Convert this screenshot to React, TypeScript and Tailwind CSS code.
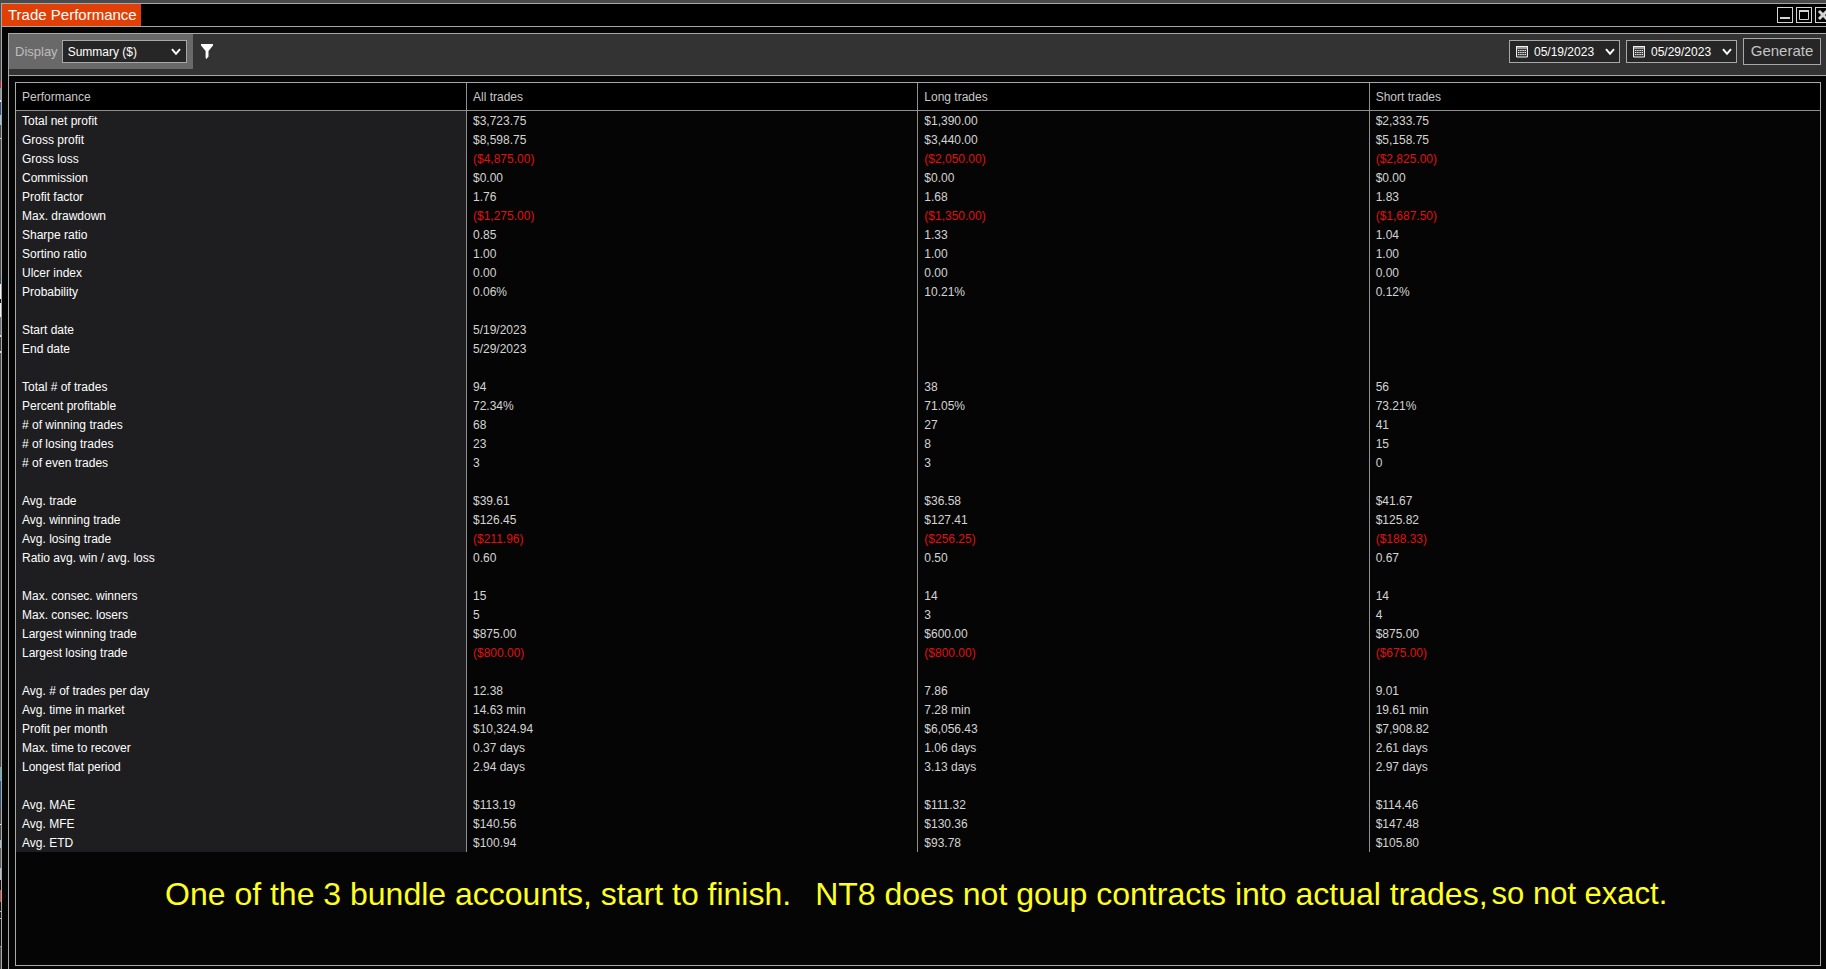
import { useId } from "react";

type Row = [string, string, string, string];

const groups: Row[][] = [
  [
    ["Total net profit", "$3,723.75", "$1,390.00", "$2,333.75"],
    ["Gross profit", "$8,598.75", "$3,440.00", "$5,158.75"],
    ["Gross loss", "($4,875.00)", "($2,050.00)", "($2,825.00)"],
    ["Commission", "$0.00", "$0.00", "$0.00"],
    ["Profit factor", "1.76", "1.68", "1.83"],
    ["Max. drawdown", "($1,275.00)", "($1,350.00)", "($1,687.50)"],
    ["Sharpe ratio", "0.85", "1.33", "1.04"],
    ["Sortino ratio", "1.00", "1.00", "1.00"],
    ["Ulcer index", "0.00", "0.00", "0.00"],
    ["Probability", "0.06%", "10.21%", "0.12%"],
  ],
  [
    ["Start date", "5/19/2023", "", ""],
    ["End date", "5/29/2023", "", ""],
  ],
  [
    ["Total # of trades", "94", "38", "56"],
    ["Percent profitable", "72.34%", "71.05%", "73.21%"],
    ["# of winning trades", "68", "27", "41"],
    ["# of losing trades", "23", "8", "15"],
    ["# of even trades", "3", "3", "0"],
  ],
  [
    ["Avg. trade", "$39.61", "$36.58", "$41.67"],
    ["Avg. winning trade", "$126.45", "$127.41", "$125.82"],
    ["Avg. losing trade", "($211.96)", "($256.25)", "($188.33)"],
    ["Ratio avg. win / avg. loss", "0.60", "0.50", "0.67"],
  ],
  [
    ["Max. consec. winners", "15", "14", "14"],
    ["Max. consec. losers", "5", "3", "4"],
    ["Largest winning trade", "$875.00", "$600.00", "$875.00"],
    ["Largest losing trade", "($800.00)", "($800.00)", "($675.00)"],
  ],
  [
    ["Avg. # of trades per day", "12.38", "7.86", "9.01"],
    ["Avg. time in market", "14.63 min", "7.28 min", "19.61 min"],
    ["Profit per month", "$10,324.94", "$6,056.43", "$7,908.82"],
    ["Max. time to recover", "0.37 days", "1.06 days", "2.61 days"],
    ["Longest flat period", "2.94 days", "3.13 days", "2.97 days"],
  ],
  [
    ["Avg. MAE", "$113.19", "$111.32", "$114.46"],
    ["Avg. MFE", "$140.56", "$130.36", "$147.48"],
    ["Avg. ETD", "$100.94", "$93.78", "$105.80"],
  ],
];

const columns = ["Performance", "All trades", "Long trades", "Short trades"];

// blank spacer row between groups
const rows = groups.flatMap((group, i): Row[] => (i === 0 ? group : [["", "", "", ""], ...group]));

// windows showing behind the left edge: [height, color]
const backdrop: [number, string][] = [
  [81, "#4a4a4a"],
  [7, "#c8283c"],
  [12, "#8c9296"],
  [2, "#f0f0f0"],
  [13, "#2f4f86"],
  [10, "#9cc4dc"],
  [13, "#4a4a4a"],
  [1, "#d8d8d8"],
  [136, "#4a4a4a"],
  [9, "#34465c"],
  [15, "#f4f4f4"],
  [4, "#101010"],
  [14, "#f0f0f0"],
  [18, "#66727c"],
  [2, "#e0e0e0"],
  [14, "#3c3c3c"],
  [2, "#e0e0e0"],
  [414, "#4a4a4a"],
  [14, "#5cb0b8"],
  [26, "#2c5488"],
  [17, "#4a4a4a"],
  [1, "#f0f0f0"],
  [15, "#4a4a4a"],
  [8, "#a8bcc8"],
  [20, "#606060"],
  [12, "#b4bcc4"],
  [10, "#101010"],
  [12, "#c8503c"],
  [9, "#101010"],
  [1, "#c0c0c0"],
  [6, "#101010"],
  [1, "#c0c0c0"],
  [27, "#101010"],
  [1, "#909090"],
];

function Chevron() {
  return (
    <svg width="10" height="8" viewBox="0 0 10 8" fill="none" stroke="#fff" strokeWidth="2" aria-hidden="true">
      <path d="M1 1.2 L5 5.8 L9 1.2" />
    </svg>
  );
}

function CalendarIcon() {
  return (
    <svg width="12" height="12" viewBox="0 0 12 12" aria-hidden="true">
      <path d="M0.5 0.5h11v10.5h-11z" fill="#3a3a3a" stroke="#f0f0f0" />
      <path d="M0 0h12v1H0z" fill="#f0f0f0" />
      <path d="M1 1h10v2H1z" fill="#9a9a9a" />
      <path d="M2 4.5h8M2 6.5h8M2 8.5h8" stroke="#f0f0f0" strokeDasharray="1.4 .8" />
    </svg>
  );
}

function DateField({ label, value }: { label: string; value: string }) {
  return (
    <div className="flex h-[23px] w-[111px] items-center border border-[#a8a8a8] bg-[#262626] pr-1 pl-1.5">
      <CalendarIcon />
      <input
        type="text"
        aria-label={label}
        defaultValue={value}
        className="ml-1.5 w-0 min-w-0 flex-1 bg-transparent text-xs text-white outline-none"
      />
      <button type="button" aria-label={`Open ${label} calendar`} className="flex">
        <Chevron />
      </button>
    </div>
  );
}

function WindowButton({ label, children }: { label: string; children: React.ReactNode }) {
  return (
    <button type="button" aria-label={label} className="flex size-4 items-center justify-center border border-[#d4d4d4]">
      <svg width="14" height="14" viewBox="0 0 14 14" fill="none" stroke="#d4d4d4" aria-hidden="true">
        {children}
      </svg>
    </button>
  );
}

function TitleBar() {
  return (
    <header className="flex h-[23px] items-center justify-between border-b border-[#a8a8a8] bg-black pr-[3px]">
      <h1 className="flex h-full items-center bg-[#e04006] pr-1 pl-1.5 text-[15px] text-white">Trade Performance</h1>
      <div className="flex gap-[3px]">
        <WindowButton label="Minimize">
          <path d="M2 10h10" strokeWidth="2" />
        </WindowButton>
        <WindowButton label="Maximize">
          <path d="M2.5 2.5h9v9h-9z" />
          <path d="M2 3h10" strokeWidth="2" />
        </WindowButton>
        <WindowButton label="Close">
          <path d="M3 3l8 8M11 3l-8 8" strokeWidth="3" />
        </WindowButton>
      </div>
    </header>
  );
}

function Toolbar() {
  const displayId = useId();
  return (
    <div className="flex h-[42px] items-start justify-between border-b border-[#a8a8a8] bg-[#333333] pr-1.5">
      <div className="flex items-center gap-2">
        <div className="flex h-[35px] items-center gap-1 bg-[#696969] px-1.5">
          <label htmlFor={displayId} className="text-[13px] text-[#bdbdbd]">
            Display
          </label>
          <div className="grid items-center">
            <select
              id={displayId}
              className="col-start-1 row-start-1 h-[23px] w-[125px] appearance-none border border-[#a8a8a8] bg-[#262626] pl-[5px] text-xs text-white"
            >
              <option>Summary ($)</option>
            </select>
            <span className="pointer-events-none col-start-1 row-start-1 mr-1.5 justify-self-end">
              <Chevron />
            </span>
          </div>
        </div>
        <button type="button" aria-label="Filter">
          <svg width="12" height="15" viewBox="0 0 12 15" fill="#fff" aria-hidden="true">
            <path d="M0 0h12v1.5L7.5 7v5.5L5.5 15 4.6 14V7L0 1.5z" />
          </svg>
        </button>
      </div>
      <div className="flex items-center gap-1.5 pt-1">
        <DateField label="start date" value="05/19/2023" />
        <DateField label="end date" value="05/29/2023" />
        <button type="button" className="h-[27px] w-[78px] border border-[#a8a8a8] bg-[#262626] text-[15px] text-[#c4c4c4]">
          Generate
        </button>
      </div>
    </div>
  );
}

function Cell({ value }: { value: string }) {
  return (
    <td className={`border-l border-[#8f8f8f] pl-1.5 ${value.startsWith("(") ? "text-[#e01010]" : "text-[#d4d4d4]"}`}>
      {value}
    </td>
  );
}

function PerformanceTable() {
  return (
    <table className="w-full table-fixed border-separate border-spacing-0 text-left text-xs">
      <thead>
        <tr className="h-7 bg-black text-[#c8c8c8]">
          {columns.map((name, i) => (
            <th
              key={name}
              scope="col"
              className={`border-b border-[#8f8f8f] pl-1.5 font-normal ${i === 0 ? "w-[450px]" : "border-l"}`}
            >
              {name}
            </th>
          ))}
        </tr>
      </thead>
      <tbody>
        {rows.map(([name, ...values], i) => (
          <tr key={i} className="h-[19px]">
            <th scope="row" className="bg-[#1e1e20] pl-1.5 font-normal text-white">
              {name}
            </th>
            {values.map((value, j) => (
              <Cell key={j} value={value} />
            ))}
          </tr>
        ))}
      </tbody>
    </table>
  );
}

export default function App() {
  return (
    <div className="flex h-screen overflow-hidden bg-[#4a4a4a] font-['Liberation_Sans',Arial,sans-serif]">
      <div className="flex w-px flex-col" aria-hidden="true">
        {backdrop.map(([height, color], i) => (
          <span key={i} className="shrink-0" style={{ height, backgroundColor: color }} />
        ))}
      </div>
      {/* The window runs a little past the right and bottom screen edges */}
      <main className="mt-[3px] -mr-[9px] -mb-[11px] flex flex-1 flex-col border border-[#a8a8a8] bg-[#050505]">
        <TitleBar />
        <div className="m-1.5 flex flex-1 flex-col border border-[#a8a8a8]">
          <Toolbar />
          <section className="m-1.5 flex-1 border border-[#a8a8a8]">
            <PerformanceTable />
            <p className="mt-6 flex pl-[149px] text-[32px] leading-9 whitespace-nowrap text-[#ffff20]">
              <span>One of the 3 bundle accounts, start to finish.</span>
              <span className="ml-6">NT8 does not goup contracts into actual trades,</span>
              <span className="ml-1 text-[31px]">so not exact.</span>
            </p>
          </section>
        </div>
      </main>
    </div>
  );
}
